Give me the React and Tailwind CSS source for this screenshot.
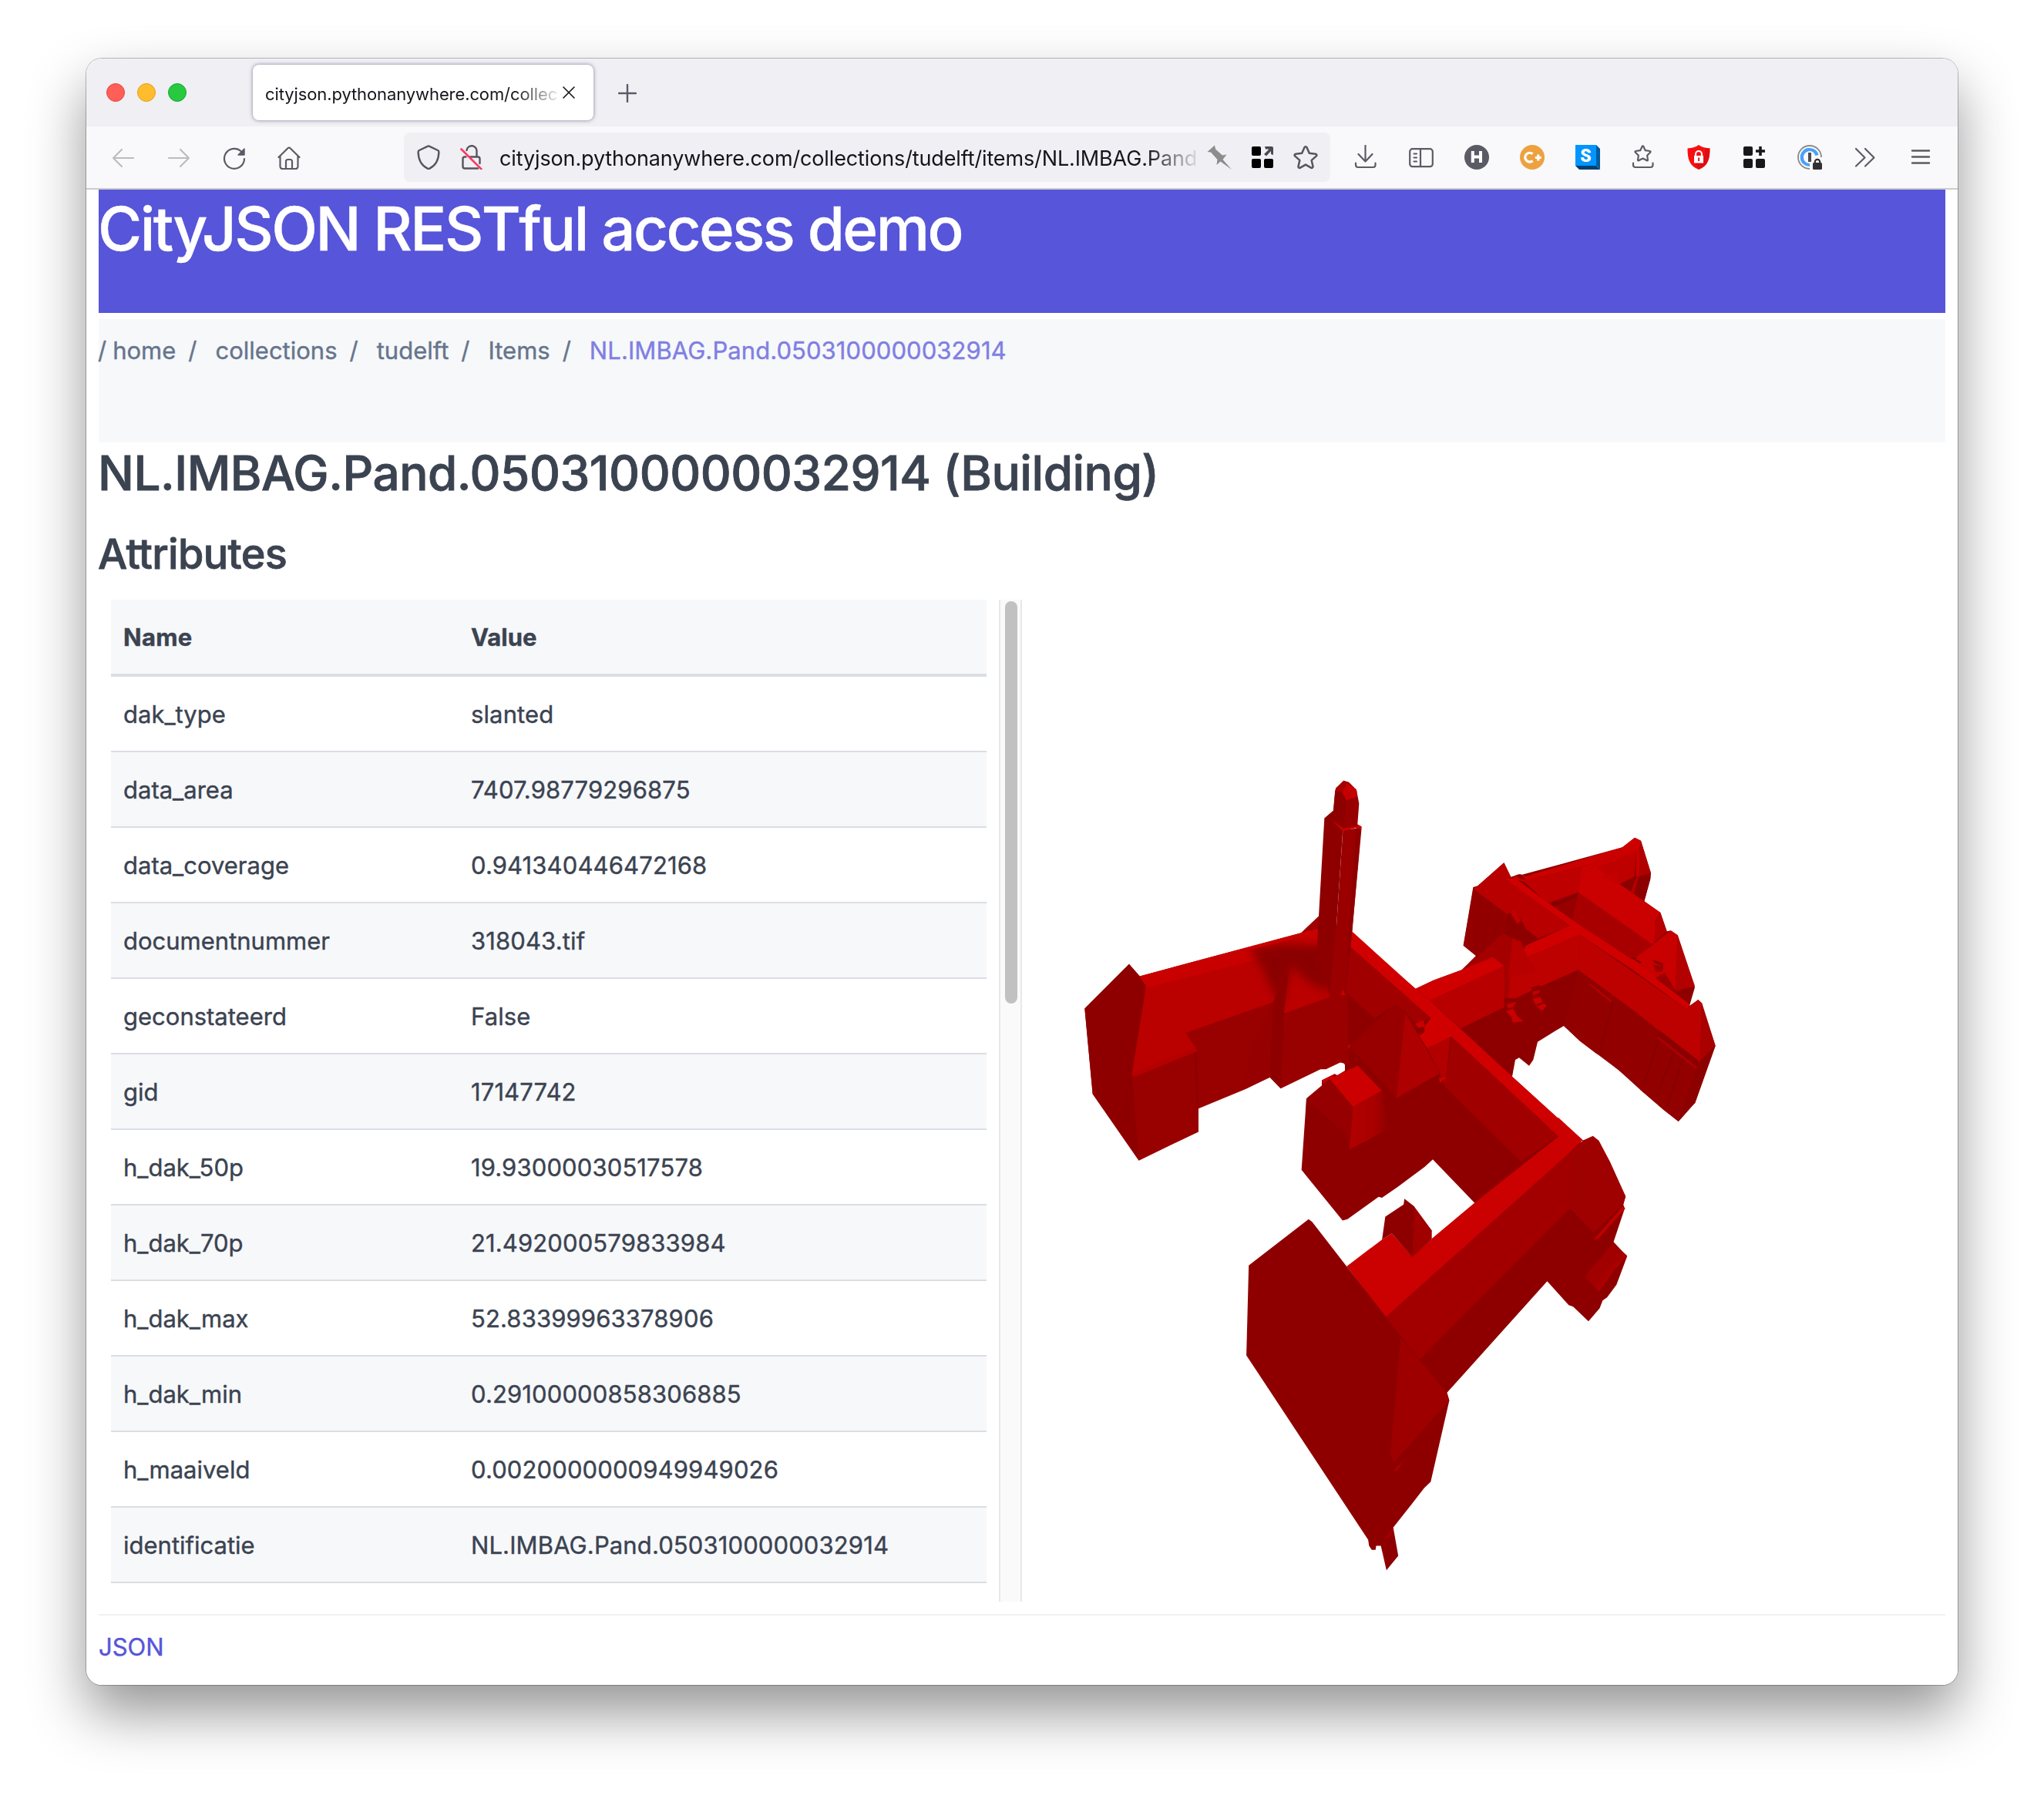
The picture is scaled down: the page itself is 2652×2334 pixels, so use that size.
import React from "react";

const rows = [
  ["dak_type", "slanted"],
  ["data_area", "7407.98779296875"],
  ["data_coverage", "0.941340446472168"],
  ["documentnummer", "318043.tif"],
  ["geconstateerd", "False"],
  ["gid", "17147742"],
  ["h_dak_50p", "19.93000030517578"],
  ["h_dak_70p", "21.492000579833984"],
  ["h_dak_max", "52.83399963378906"],
  ["h_dak_min", "0.29100000858306885"],
  ["h_maaiveld", "0.0020000000949949026"],
  ["identificatie", "NL.IMBAG.Pand.0503100000032914"],
];

const crumbs = ["home", "collections", "tudelft", "Items"];

function Icon({ children, className = "text-[#5b5b66]" }) {
  return (
    <svg
      viewBox="0 0 32 32"
      fill="none"
      stroke="currentColor"
      strokeWidth="2.2"
      strokeLinecap="round"
      strokeLinejoin="round"
      className={`size-8 shrink-0 ${className}`}
    >
      {children}
    </svg>
  );
}

function TabStrip() {
  return (
    <div className="flex h-[88px] items-center bg-[#f0eff4]">
      <div className="ml-[26px] flex gap-4">
        <span className="size-6 rounded-full border border-[#e2463f] bg-[#ff5f57]" />
        <span className="size-6 rounded-full border border-[#e1a116] bg-[#febc2e]" />
        <span className="size-6 rounded-full border border-[#12ac28] bg-[#28c840]" />
      </div>
      <div className="ml-[86px] flex h-[72px] w-[442px] items-center rounded-lg bg-white pl-4 shadow-[0_0_5px_rgba(100,100,125,0.8)]">
        <span className="mt-1 w-[380px] overflow-hidden whitespace-nowrap bg-linear-to-r from-[#15141a] from-85% to-[#15141a]/10 bg-clip-text text-[22px] leading-8 tracking-[-0.1px] text-transparent">
          cityjson.pythonanywhere.com/collections
        </span>
        <svg viewBox="0 0 16 16" className="ml-[6px] size-4" stroke="#15141a" strokeWidth="1.6" strokeLinecap="round">
          <path d="M1 1l14 14M15 1L1 15" />
        </svg>
      </div>
      <svg viewBox="0 0 24 24" className="ml-8 mt-[2px] size-6" stroke="#5b5b66" strokeWidth="2.4" strokeLinecap="round">
        <path d="M12 1v22M1 12h22" />
      </svg>
    </div>
  );
}

function Toolbar() {
  return (
    <div className="flex h-[82px] items-center border-b-2 border-[#cccccc] bg-[#f9f9fb] pl-8">
      <div className="flex gap-10">
        <Icon className="text-[#bcbbc1]">
          <path d="M29 17H3M14 6L3 17l11 11" />
        </Icon>
        <Icon className="text-[#bcbbc1]">
          <path d="M3 17h26M18 6l11 11-11 11" />
        </Icon>
        <Icon>
          <path d="M29 18A13 13 0 1 1 24.5 8" />
          <path d="M29 5v8h-8z" fill="currentColor" stroke="currentColor" strokeWidth="1.4" />
        </Icon>
        <Icon>
          <path d="M1.5 16L13.5 4.2a2 2 0 0 1 3 0L28.5 16M3.5 14.5V28a3 3 0 0 0 3 3h17a3 3 0 0 0 3-3V14.500" />
          <path d="M11 31V21.500a2.500 2.500 0 0 1 2.500-2.500h3a2.500 2.500 0 0 1 2.500 2.500V31" />
        </Icon>
      </div>

      <div className="ml-[132px] flex h-16 w-[1202px] items-center rounded-lg bg-[#f0eff4] pl-4">
        <Icon className="text-[#55555d]">
          <path
            strokeWidth="2.4"
            d="M16 1.400a3 3 0 0 1 1.300.4L28 7a2.500 2.500 0 0 1 1.400 2.200C29.200 19.500 25.500 26.500 17.300 30.600a3 3 0 0 1-2.600 0C6.500 26.500 2.800 19.500 2.600 9.200A2.500 2.500 0 0 1 4 7l10.700-5.200A3 3 0 0 1 16 1.400z"
          />
        </Icon>
        <Icon className="ml-6 text-[#55555d]">
          <path
            strokeWidth="2.400"
            d="M9.500 7A6.500 6.500 0 0 1 22.500 8.500v6M14 15.500H24a2.500 2.500 0 0 1 2.500 2.500v6M8.500 15.500H7a2.500 2.500 0 0 0-2.500 2.500v10A2.500 2.500 0 0 0 7 30.500h17"
          />
          <path strokeWidth="2.600" stroke="#fb3a64" d="M2.500 5.500l26 26" />
        </Icon>
        <span className="ml-5 mt-[3px] w-[904px] overflow-hidden whitespace-nowrap bg-linear-to-r from-[#15141a] from-93% to-[#15141a]/10 bg-clip-text text-[27px] leading-10 tracking-[-0.13px] text-transparent">
          cityjson.pythonanywhere.com/collections/tudelft/items/NL.IMBAG.Pand.0503100000032914
        </span>
        <Icon className="ml-[14px] text-[#8c8c8c]">
          <path
            stroke="none"
            fill="currentColor"
            d="M0.500 9L10 0.500l1 5L20 13.500l5.500-1-5 6.500L32 32 17.500 21.500 12.500 26l1-7L5 9.500z"
          />
        </Icon>
        <Icon className="ml-6 text-black">
          <g stroke="none" fill="currentColor">
            <rect x="2" y="2" width="12" height="12" rx="2" />
            <rect x="2" y="18" width="12" height="12" rx="2" />
            <rect x="18" y="18" width="12" height="12" rx="2" />
            <path fill="#4a4a50" d="M19 2h9a2 2 0 0 1 2 2v9l-3-1V8l-6 6.500-3-2.500 6.500-6.500H20z" />
          </g>
        </Icon>
        <Icon className="ml-6 text-[#55555d]">
          <path
            strokeWidth="2.500"
            d="M14.500 3.200a1.700 1.700 0 0 1 3 0l3.300 7.600 8 .9a1.600 1.600 0 0 1 .9 2.900l-6 5.300 1.800 8a1.700 1.700 0 0 1-2.500 1.800L16 25.600l-7 4.100a1.700 1.700 0 0 1-2.500-1.800l1.800-8-6-5.300a1.600 1.600 0 0 1 .9-2.900l8-.9z"
          />
        </Icon>
      </div>

      <div className="ml-[30px] flex gap-10">
        <Icon>
          <path d="M15.500 1v20M6.500 12l9 9.500 9-9.500M3 23.500V26a3 3 0 0 0 3 3h19.500a3 3 0 0 0 3-3v-2.500" />
        </Icon>
        <Icon>
          <rect x="1.200" y="5.200" width="29.600" height="23" rx="3.500" />
          <path d="M15 5.500v22.500M6.500 11.500H10M6.500 16.500H10M6.500 21.500H10" />
        </Icon>
        <Icon>
          <circle cx="16" cy="16" r="16" fill="currentColor" stroke="none" />
          <path d="M10.800 8v15M21 8v15M10.800 15.500H21" stroke="white" strokeWidth="4" strokeLinecap="butt" />
        </Icon>
        <Icon>
          <circle cx="16" cy="16" r="16" fill="#eda13f" stroke="none" />
          <path d="M16.500 11.800A5.800 5.800 0 1 0 16.500 20.500" stroke="white" strokeWidth="3.400" strokeLinecap="butt" />
          <path d="M23.800 12.500v8M19.800 16.500h8" stroke="white" strokeWidth="3.200" strokeLinecap="butt" />
        </Icon>
        <Icon>
          <g stroke="none">
            <path fill="#0095ff" d="M0 0h27v27H0z" />
            <path fill="#005c9e" d="M27 0l5 5v27l-5-5z" />
            <path fill="#003f70" d="M0 27h27l5 5H5z" />
            <text x="13.500" y="21.500" textAnchor="middle" fill="white" className="font-['Roboto'] text-[23px] font-black">
              S
            </text>
          </g>
        </Icon>
        <Icon>
          <path d="M14.800 1.800a.9.900 0 0 1 1.400 0l2.600 5.400 6 .8a.9.900 0 0 1 .5 1.500l-4.200 4.200.9 5.800a.8.800 0 0 1-1.200.8l-5.300-2.800-5.300 2.800a.8.800 0 0 1-1.200-.8l.9-5.800-4.200-4.200A.9.900 0 0 1 6.200 8l6-.8z" />
          <path d="M3 23.500V26a3 3 0 0 0 3 3h19.500a3 3 0 0 0 3-3v-2.500" />
        </Icon>
        <Icon>
          <g stroke="none">
            <path fill="#f80f12" d="M16 0c4 3 9 4.200 14.500 4.500C30.500 19 28 27 16 32 4 27 1.500 19 1.500 4.500 7 4.200 12 3 16 0z" />
            <path fill="#cf0a10" d="M16 32c12-5 14.500-13 14.500-27.500-2-.1-4-.3-5.800-.7L22 24H10.500z" opacity="0.600" />
            <path fill="white" d="M10 14h12v9.500H10z" />
            <path fill="#d01014" d="M15.200 16.500h1.800v4.500h-1.800z" />
          </g>
          <path d="M12 14.500V12a4 4 0 0 1 8 0v2.500" stroke="white" />
        </Icon>
        <Icon className="text-[#18181b]">
          <g stroke="none" fill="currentColor">
            <rect x="2" y="2" width="12" height="12" rx="2" />
            <rect x="2" y="18" width="12" height="12" rx="2" />
            <rect x="18" y="18" width="12" height="12" rx="2" />
            <path d="M22.200 2h3.600v4.200H30v3.600h-4.200V14h-3.600V9.800H18V6.200h4.200z" />
          </g>
        </Icon>
        <Icon>
          <path d="M16 31A15 15 0 1 1 31 16" stroke="#8a8a8d" strokeWidth="1.800" strokeLinecap="butt" />
          <path d="M16 26A10 10 0 1 1 25.500 13.500" stroke="#48a1fb" strokeWidth="4.200" strokeLinecap="butt" />
          <path d="M16 10v12" stroke="#4c4c4f" strokeWidth="4" strokeLinecap="butt" />
          <rect x="20" y="23" width="12" height="9" rx="1.500" fill="#303033" stroke="none" />
          <path d="M22.800 24v-2a3.200 3.200 0 0 1 6.400 0v2" stroke="#303033" />
        </Icon>
        <Icon>
          <path d="M4 5l11.500 11.500L4 27.500M16 5l11.500 11.500L16 27.500" />
        </Icon>
        <Icon>
          <path d="M5 7.500h22M5 15.500h22M5 23.500h22" strokeWidth="2.400" />
        </Icon>
      </div>
    </div>
  );
}

const P = ({ p, f, o }) => <polygon points={p} fill={f} opacity={o} />;

function BuildingModel() {
  return (
    <svg viewBox="1326 778 1198 1300" className="h-[1300px] w-[1198px]">
      <defs>
        <filter id="soft" x="-20%" y="-20%" width="140%" height="140%">
          <feGaussianBlur stdDeviation="18" />
        </filter>
        <clipPath id="roof">
          <polygon points="320,850 700,712 925,660 990,640 1035,878 860,937 815,897 475,1008" />
        </clipPath>
        <linearGradient id="box" x1="0" y1="0" x2="1" y2="1">
          <stop offset="0" stopColor="#a40000" />
          <stop offset="0.500" stopColor="#a00000" />
          <stop offset="1" stopColor="#cc0000" />
        </linearGradient>
        <linearGradient id="side" x1="0" y1="0" x2="1" y2="0">
          <stop offset="0" stopColor="#b20000" />
          <stop offset="0.600" stopColor="#a90000" />
          <stop offset="1" stopColor="#8e0000" />
        </linearGradient>
      </defs>

      {/* north-east wings */}
      <g transform="translate(1780 1040) scale(0.33333)">
        <P f="#8e0000" p="356,560 394,333 412,328 514,238 541,293 573,283 585,284 975,178 1023,140 1047,152 1086,278 1084,300 1060,388 1123,432 1148,505 1163,502 1190,520 1257,723 1236,795 1270,771 1285,785 1337,950 1258,1172 1240,1190 1215,1220 1193,1245 1135,1200 1045,1122 1035,1108 960,1045 885,984 875,982 810,932 747,873 715,892 645,935 628,1005 612,1028 573,997 558,1005 546,1070 170,760 170,728 240,695 350,655 405,600" />
        <P f="#940000" p="394,345 535,440 520,515 405,600 356,560" />
        <P f="#8a0000" p="420,365 430,372 405,585 395,578" o="0.500" />
        <P f="#8a0000" p="455,390 465,396 440,560 430,570" o="0.500" />
        <P f="#8a0000" p="490,415 500,420 480,540 470,545" o="0.500" />
        <P f="#b90000" p="394,340 412,328 514,238 541,293 530,303 770,485 645,532 600,495 575,450 545,425 530,440" />
        <P f="#8e0000" p="530,432 560,470 585,488 600,500 645,530 590,555 550,520 515,500" />
        <P f="#c20000" p="535,425 560,425 580,465 565,475" />
        <P f="#cc0000" p="545,300 573,283 600,290 975,178 1023,140 1047,152 1040,190 870,240 590,310" />
        <P f="#8e0000" p="560,285 580,284 600,305 575,300" />
        <P f="#be0000" p="590,310 815,255 803,353 683,395" />
        <P f="#980000" p="683,395 803,353 780,465" />
        <P f="#870000" p="690,398 800,360 798,372 710,408" />
        <P f="#a80000" p="803,353 1090,555 1035,605 1010,610 780,465" />
        <P f="#c80000" p="865,232 1040,185 1032,200 865,262" />
        <P f="#be0000" p="865,260 1030,195 1022,292 965,322 905,290" />
        <P f="#8c0000" p="965,320 1025,290 1084,278 1084,300 1060,388 1010,352" />
        <P f="#b10000" p="1047,152 1086,278 1030,295 1030,195 1040,185" />
        <P f="#c80000" p="1030,195 1042,188 1040,290 1028,292" />
        <P f="#b40000" p="1030,290 1040,288 1020,358 1008,350" />
        <P f="#cb0000" p="815,255 870,240 880,262 1060,388 1123,432 1103,462 1100,550 1090,555 803,353" />
        <P f="#b60000" p="1123,432 1148,505 1100,545 1103,460" />
        <P f="#c40000" p="900,292 955,270 960,325" />
        <P f="#c80000" p="1030,605 1163,502 1190,520 1182,735 1140,690 1100,690 1020,655" />
        <P f="#b30000" p="1190,520 1257,718 1182,738" />
        <P f="#9a0000" p="1100,690 1140,665 1182,735 1180,745" />
        <P f="#8e0000" p="1010,605 1050,625 1035,640 1015,632" />
        <P f="#9c0000" p="1095,635 1135,640 1130,662 1105,662" />
        <P f="#8e0000" p="1095,615 1135,630 1130,638 1098,628" />
        <P f="#d00000" p="1015,612 1045,632 1035,636 1012,620" />
        <P f="#d10000" p="520,300 560,300 683,392 815,485 1030,625 1100,685 1238,790 1226,808 1020,658 808,518 605,605 590,575 600,560 770,483" />
        <P f="#bd0000" p="808,518 1226,808 1240,795 1270,771 1285,785 1277,1015 1115,890 1030,822 803,655" />
        <P f="#a90000" p="1283,785 1337,950 1277,1012" />
        <P f="#920000" p="803,655 1030,822 1275,1020 1193,1245 1045,1122 960,1045 810,932 747,873" />
        <P f="#8c0000" p="1277,1012 1337,950 1258,1172 1193,1245 1262,1040" />
        <P f="#b30000" p="845,712 855,712 935,775 930,782" />
        <P f="#8a0000" p="1120,890 1275,1012 1265,1030 1110,910" />
        <P f="#ac0000" p="1112,912 1268,1035 1260,1040 1110,922" />
        <P f="#8a0000" p="935,785 940,790 890,975 882,972" />
        <P f="#8a0000" p="1112,925 1120,930 1065,1095 1058,1090" />
        <P f="#8a0000" p="1172,970 1180,976 1110,1150 1104,1145" />
        <P f="#8a0000" p="1208,1000 1216,1006 1150,1190 1144,1185" />
        <P f="#a40000" p="350,655 510,513 550,535 535,650 515,640 470,605" />
        <P f="#bd0000" p="545,560 575,540 605,605 808,518 803,655 650,722 560,765 525,770" />
        <P f="#a60000" p="550,525 570,545 545,600 530,770 515,770 515,640" />
        <P f="#b80000" p="548,535 580,545 605,605 640,655 530,690" />
        <P f="#d00000" p="170,728 240,695 350,655 470,605 515,640 225,775" />
        <P f="#b80000" p="225,775 515,640 515,800 345,883" />
        <P f="#8e0000" p="515,765 560,765 560,780 525,800" />
        <P f="#c40000" p="525,790 562,778 550,800 530,805" />
        <P f="#c80000" p="522,815 550,805 565,835 590,855 548,860 545,842" />
        <P f="#8e0000" p="620,722 655,715 655,730 625,745" />
        <P f="#c40000" p="625,740 655,732 650,745 628,755" />
        <P f="#c80000" p="625,768 655,760 665,780 680,795 662,815 640,795" />
        <P f="#8e0000" p="640,788 668,780 670,786 645,796" />
      </g>

      {/* west wing, tower and central block */}
      <g transform="translate(1380 980) scale(0.33333 0.35714)">
        <P f="#8e0000" p="945,1247 1005,1200 1005,1180 1055,1157 1065,1162 1095,1145 1095,1125 1020,1000 1100,640 1370,848 1425,891 1746,1167 2015,1396 2000,1460 1600,1626 1437,1468 1405,1495 1300,1568 1239,1607 1226,1604 1105,1685 1086,1690 926,1506" />
        <P f="#990000" p="82,920 255,758 297,802 925,645 992,585 1100,640 1110,1125 1077,1115 1020,1140 1000,1140 845,1210 803,1170 710,1212 525,1283 525,1368 430,1410 293,1472 113,1230" />
        <P f="#a00000" p="925,645 992,585 992,635" />
        <P f="#c90000" p="297,802 925,645 990,630 990,690 320,855" />
        <P f="#bb0000" p="320,845 740,745 1000,690 1035,878 860,937 815,897 475,1008 520,1070 265,1162" />
        <g clipPath="url(#roof)">
          <polygon
            points="720,700 860,682 1000,690 1040,780 1040,860 960,830 885,765 850,910 810,850 765,760"
            fill="#8a0000"
            filter="url(#soft)"
          />
        </g>
        <P f="#8e0000" p="845,830 880,760 858,937 845,1210 803,1170 815,897" />
        <P f="#8e0000" p="82,920 255,758 320,835 265,1162 293,1472 113,1230" />
        <P f="#b40000" p="262,1155 515,1060 520,1075 275,1168" />
        <P f="#8e0000" p="508,1080 520,1075 525,1283 518,1290" />
        <P f="#940000" p="740,1050 812,900 803,1170 690,1215" o="0.700" />
        <P f="#d10000" p="1123,640 1370,848 1425,891 1746,1167 2022,1400 1925,1384 1510,1022 1415,1064 1380,1012 1405,985 1430,955 1115,695" />
        <P f="#a00000" p="1115,695 1430,955 1370,975 1330,930 1290,905 1210,955 1100,862" />
        <P f="#a00000" p="1510,1022 1925,1382 1780,1475 1485,1204" />
        <P f="#b20000" p="1415,1064 1505,1022 1485,1200 1465,1155" />
        <P f="#980000" p="1110,1055 1290,905 1330,935 1295,1245" />
        <P f="#ae0000" p="1330,935 1465,1155 1295,1245" />
        <P f="#cc0000" p="1370,975 1400,962 1405,985 1380,990" />
        <P f="#8e0000" p="1380,1005 1405,985 1405,1005 1385,1018" />
        <P f="#c80000" p="1105,1055 1115,1048 1112,1068" />
        <P f="#c80000" p="1460,1172 1490,1170 1465,1190" />
        <P f="#c80000" p="1005,1180 1055,1157 1045,1175 1010,1192" />
        <P f="#960000" p="1035,1175 1127,1277 1112,1390 945,1247 1005,1200" />
        <P f="#8e0000" p="945,1247 1112,1390 1112,1440 940,1400" />
        <P f="#cc0000" p="1035,1175 1145,1127 1238,1218 1127,1277" />
        <P f="url(#side)" p="1127,1277 1238,1218 1268,1355 1112,1432" />
        <P f="#8e0000" p="1015,228 1050,200 1087,268 1062,620 1035,870 1000,730 985,715" />
        <P f="#9b0000" p="1087,272 1160,262 1123,640 1095,870 1090,1117 1077,1115 1020,1140 1035,870 1062,620" />
        <P f="#8e0000" p="1138,266 1158,262 1123,640 1100,850 1110,640" />
        <P f="#980000" p="1050,200 1057,125 1090,92 1110,97 1140,125 1150,175 1143,262 1090,268 1040,240" />
        <P f="#8e0000" p="1050,200 1057,130 1085,135 1100,165 1092,266 1040,240" />
        <P f="#c50000" p="1085,130 1103,100 1140,125 1143,150 1100,163" />
        <P f="#a80000" p="1060,118 1090,92 1103,100 1085,132 1058,132" />
        <P f="#c60000" p="1045,235 1090,265 1143,257 1143,250 1160,258 1158,268 1135,264 1087,276" />
        <P f="#c80000" p="1085,850 1097,870 1080,872" />
      </g>

      {/* south wing */}
      <g transform="translate(1580 1450) scale(0.38265 0.39541)">
        <P f="#8e0000" p="560,640 685,780 1195,295 1237,73 1383,258 1375,285 1380,298 1342,408 1388,455 1352,548 1320,590 1305,600 1295,625 1257,668 1205,620 1190,615 1117,537 775,905 600,720" />
        <P f="#a20000" p="560,640 1140,145 1200,100 1240,85 1195,297 682,796 600,700" />
        <P f="#cb0000" p="437,488 557,400 590,380 660,455 725,398 870,280 1155,62 1088,0 1155,0 1237,73 1198,110 1150,152 568,655" />
        <P f="#9f0000" p="1198,110 1237,75 1272,60 1292,75 1330,145 1383,258 1375,285 1275,378 1194,297" />
        <P f="#c00000" p="1275,400 1372,292 1382,298 1290,398" />
        <P f="url(#box)" p="1243,522 1340,412 1388,453 1345,500 1292,570" />
        <P f="#8e0000" p="557,400 568,325 630,285 633,266 665,290 725,370 725,398 660,457 590,380" />
        <P f="#a00000" p="667,295 725,370 725,398 660,457" />
        <P f="#8e0000" p="105,485 308,333 320,342 437,488 620,715 778,905 785,928 722,1195 700,1215 660,1265 595,1345 612,1438 572,1485 553,1405 537,1405 535,1418 522,1418 513,1405 510,1385 97,780" />
        <P f="#9e0000" p="620,722 777,903 785,928 598,1130 585,1108" />
        <P f="#b00000" p="597,1160 635,1118 608,1158" />
        <P f="#a00000" p="560,1385 595,1345 590,1370" />
      </g>
    </svg>
  );
}

export default function App() {
  return (
    <div className="h-[2334px] w-[2652px] overflow-hidden bg-white px-28 pt-[76px] font-['Inter',sans-serif]">
      <div className="h-[2110px] rounded-[20px] shadow-[0_36px_72px_rgba(0,0,0,0.42),0_0_0_1px_rgba(0,0,0,0.25)]">
        <div className="h-full overflow-hidden rounded-[20px] bg-white">
          <TabStrip />
          <Toolbar />

          <main className="px-4 text-[31px] text-[#3b4351] [-webkit-text-stroke:0.4px_currentColor]">
            <header className="h-40 bg-[#5755d9]">
              <h1 className="-ml-px text-[78px] font-medium leading-[102px] tracking-[-2.5px] text-white">
                CityJSON RESTful access demo
              </h1>
            </header>

            <nav className="mt-2 flex h-40 bg-[#f7f8fa] leading-[81px] text-[#66758c]">
              <span className="-ml-px">/</span>
              {crumbs.map((c, i) => (
                <React.Fragment key={c}>
                  <span className={i === 0 ? "ml-2" : "ml-6"}>{c}</span>
                  <span className="ml-4">/</span>
                </React.Fragment>
              ))}
              <span className="ml-6 tracking-[0.08px] text-[#807fe2]">NL.IMBAG.Pand.0503100000032914</span>
            </nav>

            <h2 className="-ml-px text-[62px] font-medium leading-[79px] tracking-[-0.48px] [-webkit-text-stroke:0.8px_currentColor]">
              NL.IMBAG.Pand.0503100000032914 (Building)
            </h2>
            <h3 className="-ml-px mt-10 text-[54px] font-medium leading-[51px] tracking-[-0.7px] [-webkit-text-stroke:0.8px_currentColor]">
              Attributes
            </h3>

            <div className="mt-[34px] flex h-[1300px]">
              <div className="w-[1168px] overflow-hidden px-4">
                <div className="flex h-[100px] border-b-4 border-[#dadee4] bg-[#f7f8fa] px-4 pt-px font-bold leading-[96px]">
                  <span className="w-[451px] tracking-[0.3px]">Name</span>
                  <span>Value</span>
                </div>
                {rows.map(([name, value], i) => (
                  <div
                    key={name}
                    className={`flex h-[98px] border-b-2 border-[#dadee4] px-4 pt-px leading-[96px] ${i % 2 ? "bg-[#f7f8fa]" : "bg-white"}`}
                  >
                    <span className="w-[451px]">{name}</span>
                    <span className="tracking-[0.12px]">{value}</span>
                  </div>
                ))}
              </div>
              <div className="flex w-[30px] justify-center border-x-2 border-[#e8e8e8] bg-[#fafafa] pt-[2px] pl-px">
                <div className="h-[522px] w-4 rounded-full bg-[#c1c1c1]" />
              </div>
              <BuildingModel />
            </div>

            <footer className="mt-4 border-t-2 border-[#f1f1f3] leading-[81px]">
              <a className="text-[#5755d9]">JSON</a>
            </footer>
          </main>
        </div>
      </div>
    </div>
  );
}
